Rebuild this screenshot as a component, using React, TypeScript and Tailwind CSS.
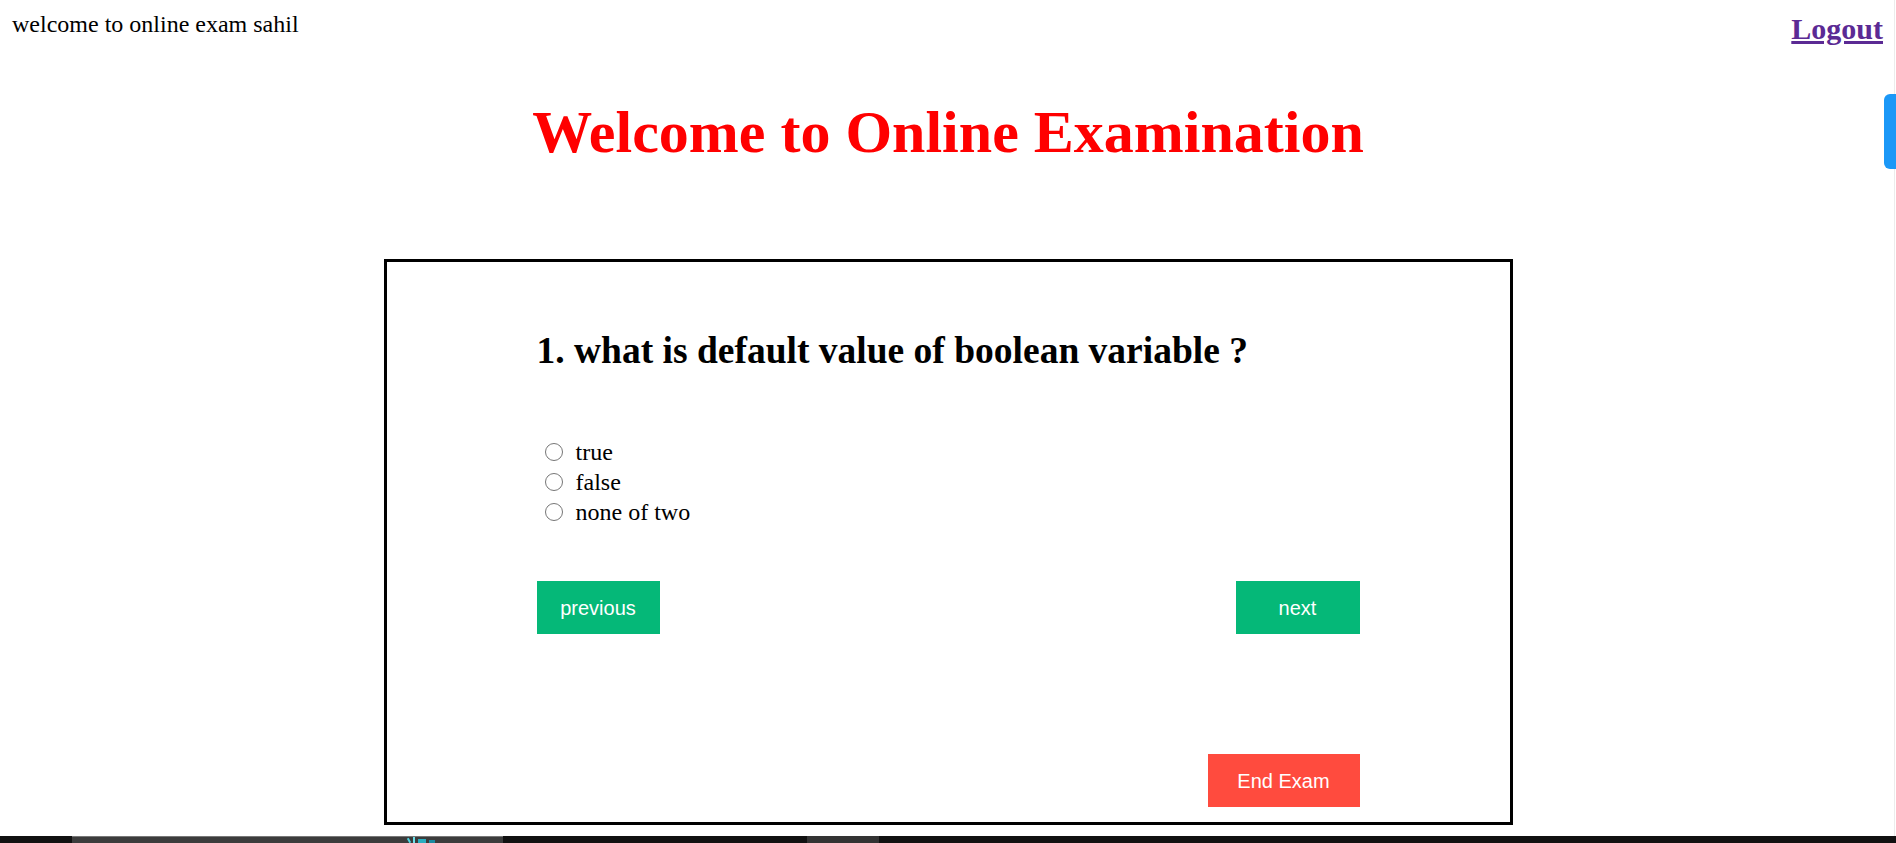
const options = ["true", "false", "none of two"];

const serif = "font-['Liberation_Serif','Times_New_Roman',serif]";

const Header = () => (
  <div className={`flex h-[41px] items-start justify-between pt-[6px] pl-[12px] pr-[13px] ${serif}`}>
    <span className="text-[24px] text-black">welcome to online exam sahil</span>
    <a href="#" className="text-[30px] font-bold text-[#5b2a94] underline">
      Logout
    </a>
  </div>
);

const QuestionCard = () => (
  <div className="mx-auto mt-[92px] w-[1129px] border-[3px] border-black bg-white px-[150px] pt-[68px] pb-[15px]">
    {/* question */}
    <h2 className={`text-[37.5px] leading-[42px] font-bold text-black ${serif}`}>
      1. what is default value of boolean variable ?
    </h2>

    {/* options */}
    <div className={`mt-[65px] flex flex-col ${serif}`}>
      {options.map((opt, i) => (
        <label key={i} className="flex h-[30px] items-center text-[24px] text-black">
          <input
            type="radio"
            name="answer"
            className="m-0 ml-[8px] mr-[13px] h-[18px] w-[18px]"
          />
          <span>{opt}</span>
        </label>
      ))}
    </div>

    {/* nav buttons */}
    <div className="mt-[54px] flex justify-between font-['Liberation_Sans',Arial,sans-serif]">
      <button className="h-[53px] w-[123px] bg-[#05b878] text-[20px] text-white">previous</button>
      <button className="h-[53px] w-[124px] bg-[#05b878] text-[20px] text-white">next</button>
    </div>

    <div className="mt-[120px] flex justify-end font-['Liberation_Sans',Arial,sans-serif]">
      <button className="h-[53px] w-[152px] bg-[#ff4b3e] text-[20px] text-white">End Exam</button>
    </div>
  </div>
);

const Taskbar = () => (
  <div className="mt-[11px] flex h-[7px] bg-[#111111]">
    <div className="ml-[72px] flex w-[431px] border-t border-[#777777] bg-[#3c3c3c]">
      <div className="ml-[336px] flex items-end gap-[3px]">
        <span className="h-[5px] w-[2px] rotate-[-30deg] bg-[#4fd3e0]" />
        <span className="h-[6px] w-[2px] bg-[#6be0ea]" />
        <span className="h-[4px] w-[8px] bg-[#2aaec0]" />
        <span className="h-[3px] w-[6px] bg-[#1a8aa0]" />
      </div>
    </div>
    <div className="ml-[304px] w-[72px] bg-[#333333]" />
  </div>
);

export default function App() {
  return (
    <div className="relative h-[843px] w-full overflow-hidden bg-white">
      <Header />

      <h1 className={`mt-[57px] text-center text-[60px] leading-[69px] font-bold text-[#ff0000] ${serif}`}>
        Welcome to Online Examination
      </h1>

      <QuestionCard />
      <Taskbar />

      {/* scroll indicator */}
      <div className="absolute top-0 right-[1px] h-[836px] w-px bg-[#ececec]" />
      <div className="absolute top-[94px] right-0 h-[75px] w-[12px] rounded-l-[6px] bg-[#1b98f7]" />
    </div>
  );
}
